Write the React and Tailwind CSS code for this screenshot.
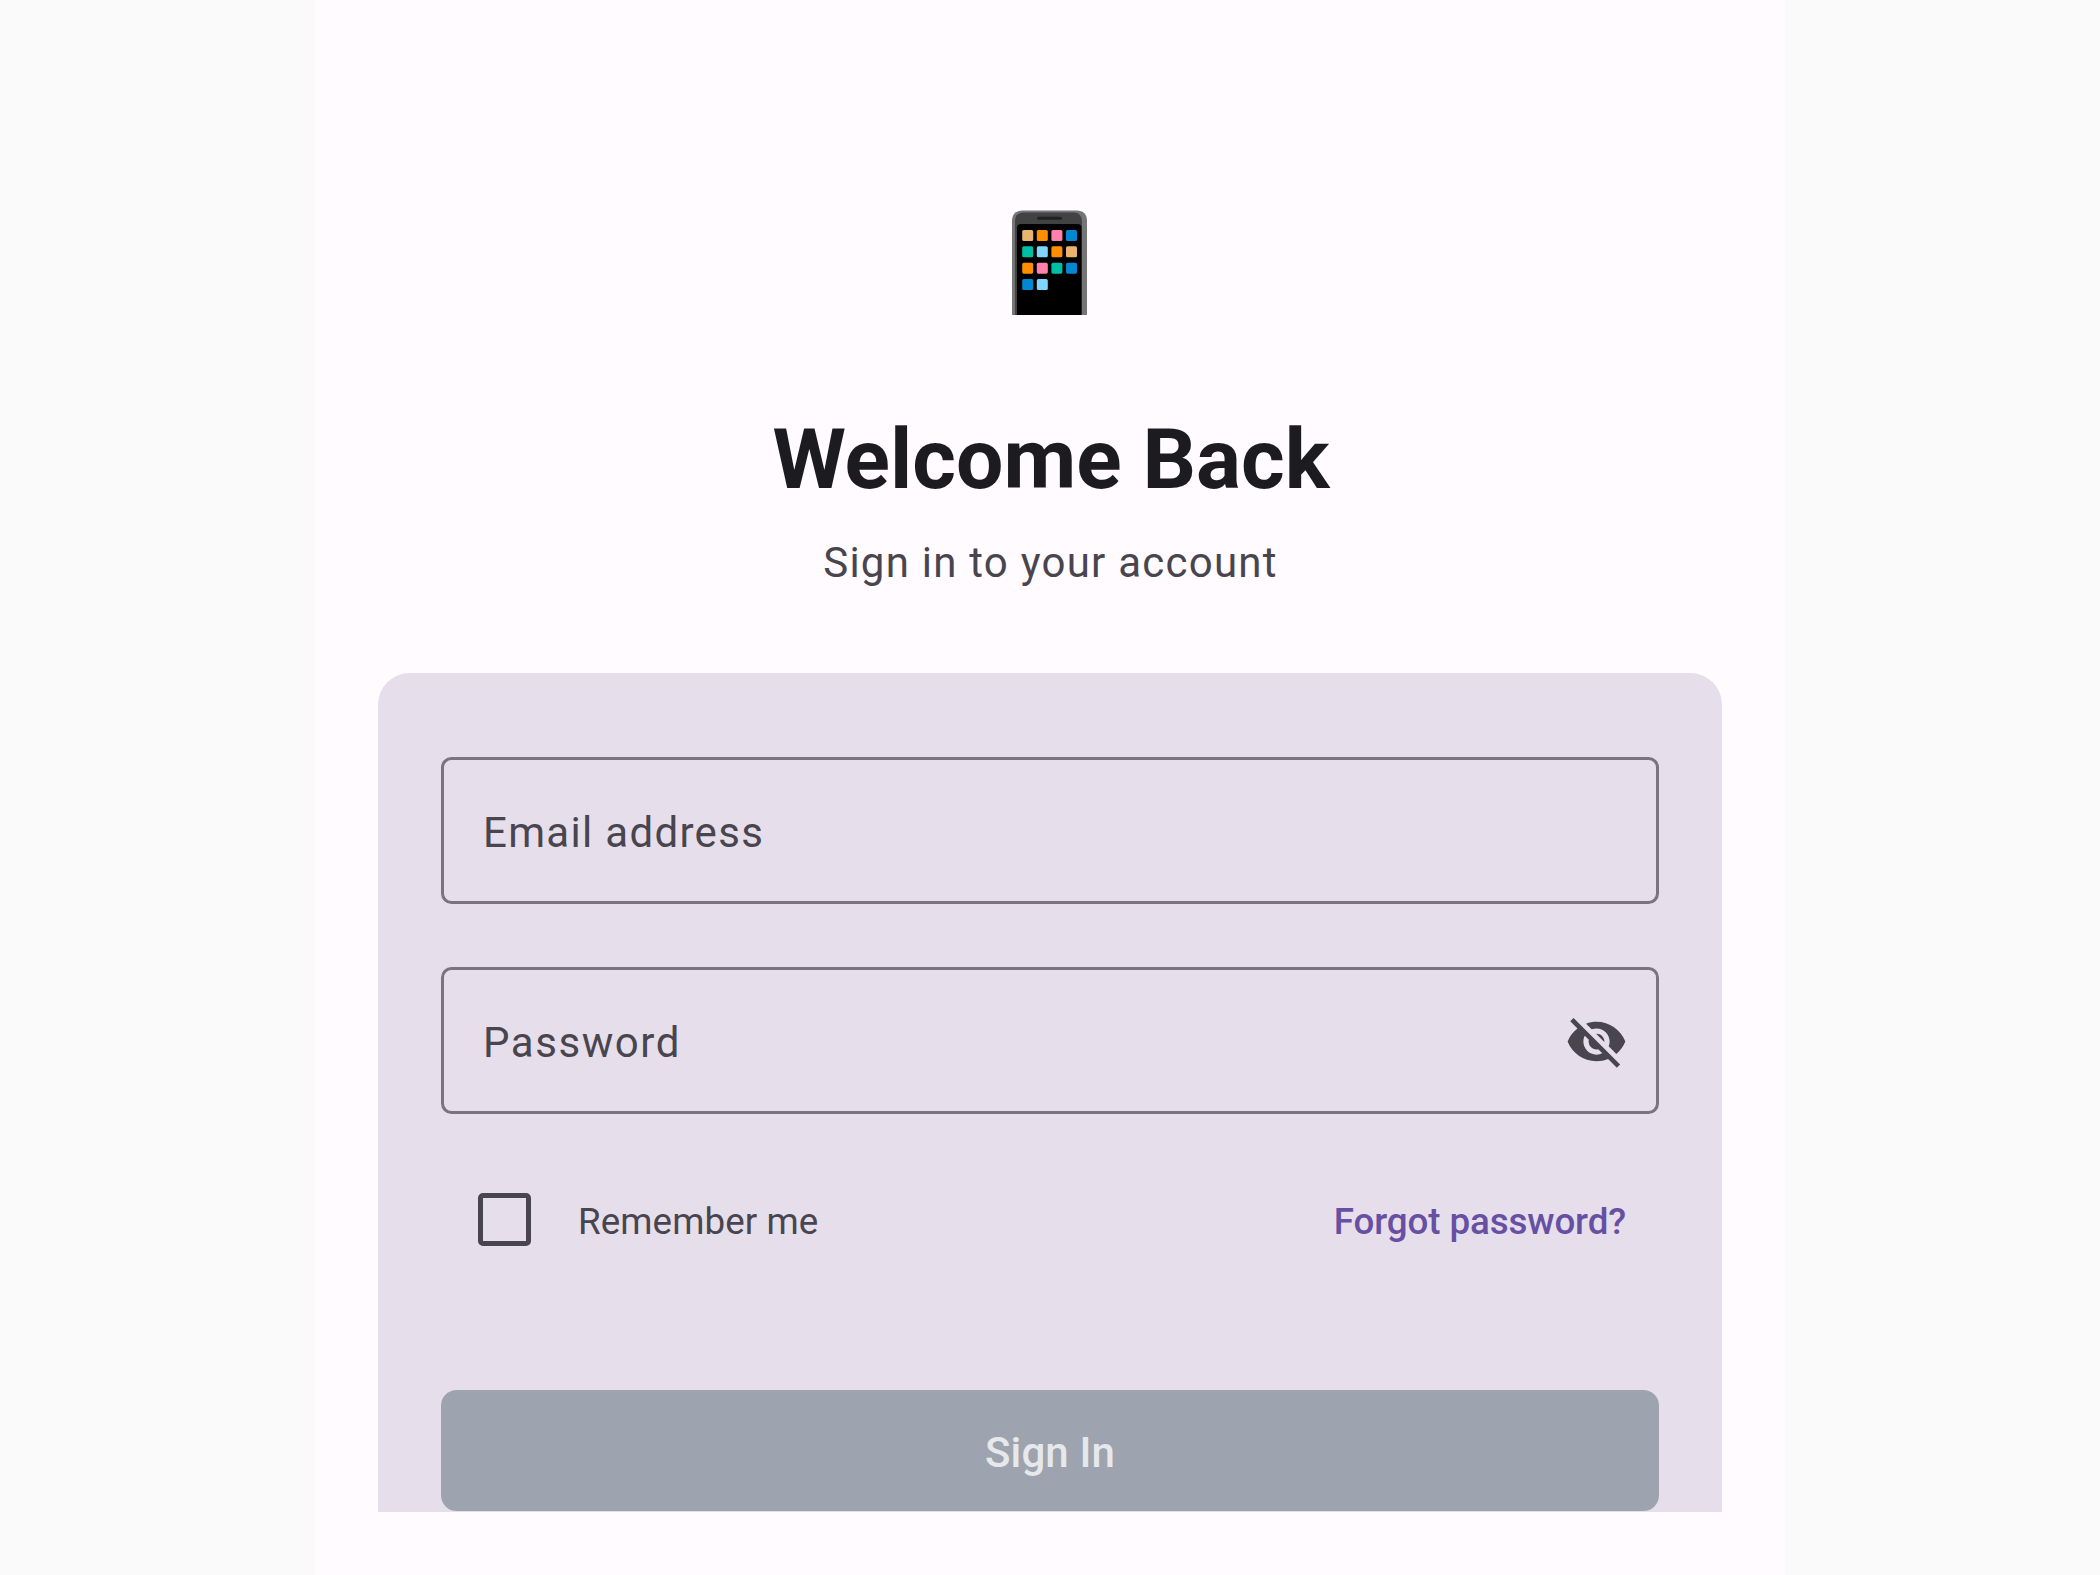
import React from "react";

const ORANGE = "#ff8f00";
const PINK = "#ff80ab";
const BLUE = "#0288d1";
const TEAL = "#00bfa5";
const SKY = "#81d4fa";
const TAN = "#e8b46f";

const APPS = [
  [TAN, ORANGE, PINK, BLUE],
  [TEAL, SKY, ORANGE, TAN],
  [ORANGE, PINK, TEAL, BLUE],
  [BLUE, SKY],
];

function Phone() {
  return (
    <svg className="mr-[1px] block h-[105px] w-[75px]" viewBox="0 0 75 105">
      <path d="M0 105V11.300Q0 0.600 10.500 0.600H64.500Q75 0.600 75 11.300V105Z" fill="#757575" />
      <path d="M3 105V12Q3 2.400 12 2.400H62Q70 2.400 70 12V105Z" fill="#424242" />
      <path d="M5 105V18Q5 14 9 14H65.500Q69.500 14 69.500 18V105Z" fill="#000000" />
      <rect x="25" y="6.700" width="25" height="3" rx="1.500" fill="#212121" />
      {APPS.map((row, r) =>
        row.map((color, c) => (
          <rect
            key={`${r}-${c}`}
            x={10.2 + c * 14.6}
            y={20 + r * 16.35}
            width="11"
            height="11"
            rx="1.600"
            fill={color}
          />
        ))
      )}
    </svg>
  );
}

function VisibilityOff() {
  return (
    <svg className="mt-[2px] h-[63px] w-[63px]" viewBox="0 0 24 24" fill="#49454f">
      <path d="M12 7c2.760 0 5 2.240 5 5 0 .65-.13 1.260-.36 1.830l2.920 2.920c1.510-1.260 2.700-2.890 3.430-4.750-1.730-4.390-6-7.500-11-7.500-1.400 0-2.740.25-3.980.7l2.160 2.160C10.740 7.130 11.350 7 12 7zM2 4.270l2.280 2.280.46.46C3.080 8.300 1.780 10.020 1 12c1.730 4.390 6 7.500 11 7.500 1.550 0 3.030-.3 4.380-.84l.42.42L19.730 22 21 20.730 3.270 3 2 4.270zM7.530 9.800l1.550 1.550c-.05.21-.08.43-.08.65 0 1.660 1.340 3 3 3 .22 0 .44-.03.65-.08l1.550 1.550c-.67.33-1.410.53-2.200.53-2.760 0-5-2.240-5-5 0-.79.2-1.530.53-2.200zm4.310-.78l3.150 3.150.02-.16c0-1.660-1.340-3-3-3l-.17.01z" />
    </svg>
  );
}

function Field({ label, labelClass, children }) {
  return (
    <div className="flex h-[147px] items-center justify-between rounded-[10.5px] border-[3px] border-[#79747e] pr-[28px] pl-[39px]">
      <span className={`pt-[3px] text-[42px] leading-[63px] ${labelClass}`}>{label}</span>
      {children}
    </div>
  );
}

export default function App() {
  return (
    <div className="flex h-[1575px] w-full justify-center overflow-hidden bg-[#fafafa] font-[Roboto,sans-serif] text-[#49454f]">
      <main className="flex w-[1470px] flex-col bg-[#fffbff] px-[63px] pt-[210px]">
        <header className="flex flex-col items-center">
          <Phone />
          <h1 className="mt-[92px] pl-[2px] text-[84px] leading-[105px] font-bold text-[#1c1b1f]">Welcome Back</h1>
          <p className="mt-[19px] pl-[1px] text-[42px] leading-[63px] tracking-[1.24px]">Sign in to your account</p>
        </header>

        <section className="mt-[79px] flex h-[839px] flex-col rounded-t-[31.5px] bg-[#e6dfeb] px-[63px] pt-[84px]">
          <div className="flex flex-col gap-[63px]">
            <Field label="Email address" labelClass="tracking-[1.3125px]" />
            <Field label="Password" labelClass="tracking-[1.55px]">
              <VisibilityOff />
            </Field>
          </div>

          <div className="mt-[79px] flex h-[53px] items-center justify-between pr-[33px] pl-[37px] text-[36.75px] leading-[52px]">
            <div className="flex items-center">
              <span className="h-[53px] w-[53px] rounded-[5px] border-[5px] border-[#49454f]" />
              <span className="ml-[47px] pt-[5px] tracking-[0.07px]">Remember me</span>
            </div>
            <span className="pt-[5px] font-medium tracking-[-0.12px] text-[#6750a4]">Forgot password?</span>
          </div>

          <div className="mt-[144px] flex h-[121px] items-center justify-center rounded-[15.75px] bg-[#9da3af] pt-[4px] text-[42px] leading-[63px] font-medium tracking-[0.12px] text-[#e6e8eb]">
            Sign In
          </div>
        </section>
      </main>
    </div>
  );
}
